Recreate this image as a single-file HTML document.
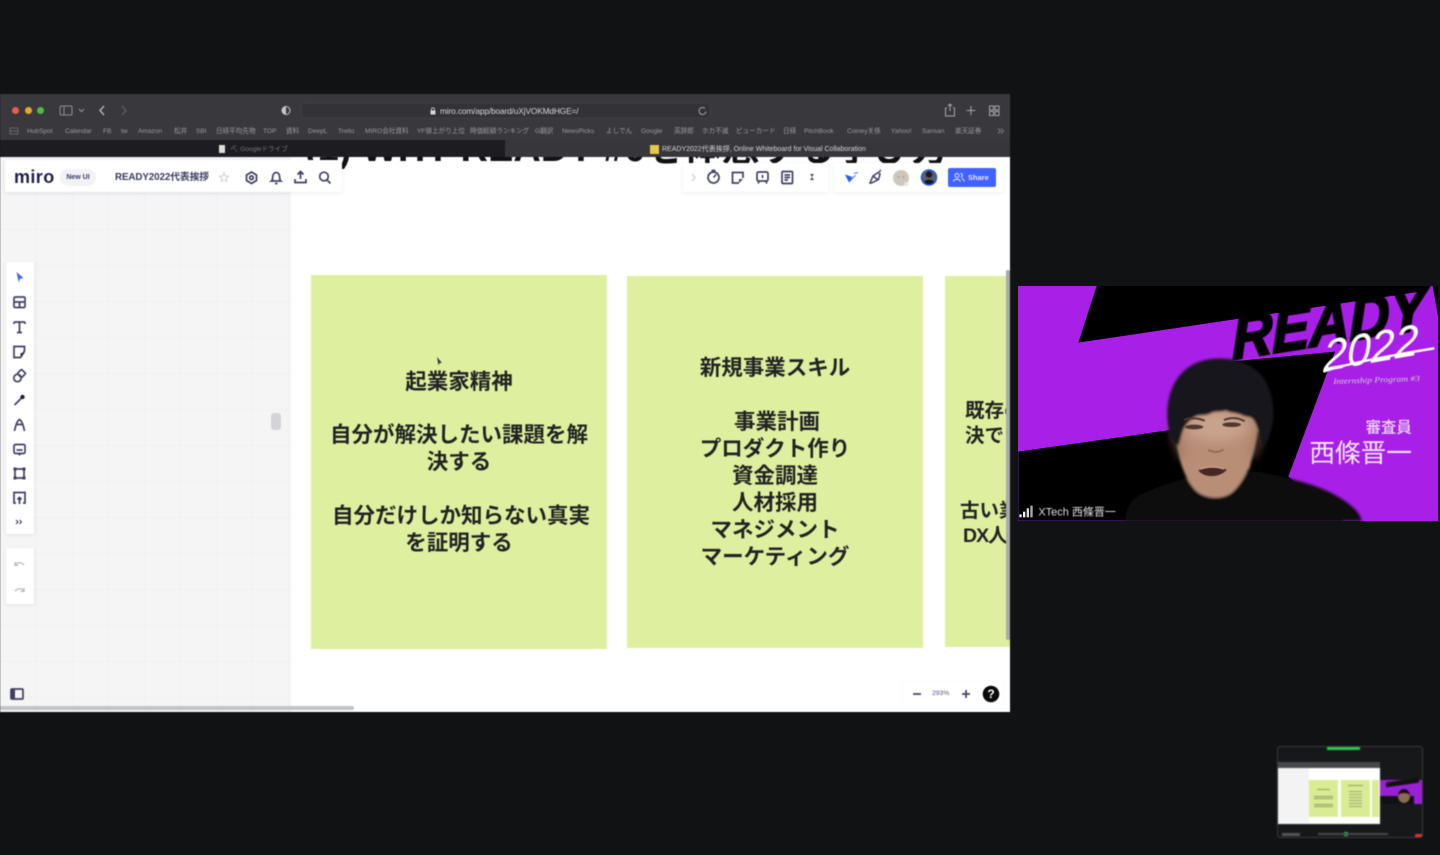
<!DOCTYPE html>
<html lang="ja"><head><meta charset="utf-8"><title>READY2022</title>
<style>
*{box-sizing:border-box}
html,body{margin:0;padding:0;width:1440px;height:855px;overflow:hidden;background:#111214}
body{font-family:"Liberation Sans","Noto Sans CJK JP",sans-serif;position:relative}
.a{position:absolute}
#win{left:0;top:94px;width:1010px;height:618px;overflow:hidden;background:#fff;filter:blur(.55px)}
#win .a{white-space:nowrap}
.bm{top:33px;font-size:6.6px;color:#9b9b9f;line-height:9px}
.note{background:#def09f;color:#222;font-weight:700;font-size:21.5px;line-height:27px;text-align:center}
.note div{position:absolute;white-space:nowrap}
.panel{background:#fff;box-shadow:0 1px 4px rgba(40,40,70,.09);border-radius:2px}
svg{position:absolute;overflow:visible}
.ic{fill:none;stroke:#3f3f62;stroke-width:1.7}
</style></head><body>

<div class="a" id="win">
  <!-- browser chrome -->
  <div class="a" style="left:0;top:0;width:1011px;height:46px;background:#39393d"></div>
  <div class="a" style="left:0;top:46px;width:505px;height:17px;background:#1d1d21"></div>
  <div class="a" style="left:505px;top:46px;width:506px;height:17px;background:#37373b"></div>
  <div class="a" style="left:12px;top:13px;width:7px;height:7px;border-radius:50%;background:#ef5a52"></div>
  <div class="a" style="left:25px;top:13px;width:7px;height:7px;border-radius:50%;background:#e8a82c"></div>
  <div class="a" style="left:37px;top:13px;width:7px;height:7px;border-radius:50%;background:#4fbb45"></div>
  <svg class="a" style="left:0;top:0" width="1011" height="46" fill="none" stroke="#8f8f93" stroke-width="1">
    <rect x="60" y="12" width="12" height="9" rx="1.5"/><path d="M64 12v9"/>
    <path d="M79 15l2.500 2.500 2.500-2.500" stroke-width="1.200"/>
    <path d="M104 12l-4 4.500 4 4.500" stroke="#b5b5b8" stroke-width="1.400"/>
    <path d="M122 12l4 4.500-4 4.500" stroke="#5c5c60" stroke-width="1.400"/>
    <circle cx="286" cy="16.500" r="4" stroke="#c8c8cc"/><path d="M286 12.500a4 4 0 0 0 0 8z" fill="#c8c8cc" stroke="none"/>
    <rect x="301" y="9" width="409" height="15" rx="4" fill="#333337" stroke="#404044"/>
    <path d="M705 14.500a3.500 3.500 0 1 0 1 3" stroke="#a5a5a9"/>
    <path d="M947 14h-1.500v8h9v-8H953M950 17v-7M948 12l2-2 2 2" stroke="#a5a5a9"/>
    <path d="M971 12v9M966.500 16.500h9" stroke="#a5a5a9"/>
    <rect x="989.500" y="12" width="4" height="4" stroke="#a5a5a9"/><rect x="995" y="12" width="4" height="4" stroke="#a5a5a9"/>
    <rect x="989.500" y="17.500" width="4" height="4" stroke="#a5a5a9"/><rect x="995" y="17.500" width="4" height="4" stroke="#a5a5a9"/>
    <path d="M10 34h8M10 37h8M10 40h8M10 34v6M18 34v6" stroke="#77777b" stroke-width=".7"/>
    <path d="M998 34.500l2.500 2.500-2.500 2.500M1001 34.500l2.500 2.500-2.500 2.500" stroke="#8f8f93" stroke-width=".8"/>
    <rect x="430.500" y="16.500" width="5" height="4" fill="#d8d8da" stroke="none"/><path d="M431.500 16.500v-1.200a1.500 1.500 0 0 1 3 0v1.200" stroke="#d8d8da" stroke-width=".8"/>
  </svg>
  <div class="a" style="left:440px;top:12px;font-size:8.300px;line-height:10px;color:#d8d8da;letter-spacing:-.12px">miro.com/app/board/uXjVOKMdHGE=/</div>
  <div class="a bm" style="left:27px">HubSpot</div><div class="a bm" style="left:65px">Calendar</div><div class="a bm" style="left:103px">FB</div><div class="a bm" style="left:121px">tw</div><div class="a bm" style="left:138px">Amazon</div><div class="a bm" style="left:174px">松井</div><div class="a bm" style="left:196px">SBI</div><div class="a bm" style="left:216px">日経平均先物</div><div class="a bm" style="left:263px">TOP</div><div class="a bm" style="left:286px">資料</div><div class="a bm" style="left:308px">DeepL</div><div class="a bm" style="left:338px">Trello</div><div class="a bm" style="left:365px">MIRO会社資料</div><div class="a bm" style="left:417px">YF値上がり上位</div><div class="a bm" style="left:470px">時価総額ランキング</div><div class="a bm" style="left:535px">G翻訳</div><div class="a bm" style="left:562px">NewsPicks</div><div class="a bm" style="left:606px">よしでん</div><div class="a bm" style="left:641px">Google</div><div class="a bm" style="left:674px">英辞郎</div><div class="a bm" style="left:702px">ホカ不滅</div><div class="a bm" style="left:736px">ビューカード</div><div class="a bm" style="left:783px">日経</div><div class="a bm" style="left:804px">PitchBook</div><div class="a bm" style="left:847px">Coiney关係</div><div class="a bm" style="left:891px">Yahoo!</div><div class="a bm" style="left:922px">Sansan</div><div class="a bm" style="left:955px">楽天証券</div>
  <div class="a" style="left:219px;top:51px;width:6px;height:8px;background:#ddd"></div>
  <div class="a" style="left:230px;top:51px;font-size:6.600px;line-height:10px;color:#77777b">⛏ Googleドライブ</div>
  <div class="a" style="left:650px;top:51px;width:9px;height:9px;background:#e5c84a"></div>
  <div class="a" style="left:662px;top:51px;font-size:7px;line-height:10px;color:#d5d5d8">READY2022代表挨拶, Online Whiteboard for Visual Collaboration</div>

  <!-- page -->
  <div class="a" style="left:0;top:63px;width:1011px;height:555px;background:#fff;overflow:hidden">
    <div class="a" style="left:0;top:0;width:291px;height:555px;background-color:#f5f5f6;background-image:linear-gradient(#f0f0f1 1px,transparent 1px),linear-gradient(90deg,#f0f0f1 1px,transparent 1px);background-size:36px 36px"></div>
    <div class="a" style="left:305px;top:-28px;font-size:38px;line-height:40px;font-weight:700;color:#111">(1) WHY READY #0を体感する学び方</div>

    <div class="a note" style="left:311px;top:118px;width:296px;height:374px">
      <div style="left:0;width:296px;top:94px">起業家精神</div>
      <div style="left:0;width:296px;top:147px">自分が解決したい課題を解<br>決する</div>
      <div style="left:2px;width:296px;top:228px">自分だけしか知らない真実</div>
      <div style="left:0;width:296px;top:255px">を証明する</div>
    </div>
    <div class="a note" style="left:627px;top:119px;width:296px;height:372px">
      <div style="left:0;width:296px;top:79px">新規事業スキル</div>
      <div style="left:2px;width:296px;top:133px">事業計画</div>
      <div style="left:0;width:296px;top:160px">プロダクト作り<br>資金調達<br>人材採用<br>マネジメント<br>マーケティング</div>
    </div>
    <div class="a note" style="left:945px;top:119px;width:66px;height:371px;overflow:hidden;font-size:19.500px;line-height:25px;text-align:left">
      <div style="left:20px;top:123px">既存の課題解<br>決できる</div>
      <div style="left:15px;top:223px">古い業界を</div>
      <div style="left:18px;top:248px;letter-spacing:-1px">DX人材で</div>
    </div>

    <!-- top-left panel -->
    <div class="a panel" style="left:5px;top:3px;width:337px;height:32px"></div>
    <div class="a" style="left:14px;top:9px;font-size:18px;line-height:22px;font-weight:700;color:#1f1f4a;letter-spacing:.4px">miro</div>
    <div class="a" style="left:60px;top:12px;width:36px;height:17px;border-radius:8px;background:#f3f3f7;font-size:7px;line-height:17px;font-weight:700;text-align:center;color:#3d3d62">New UI</div>
    <div class="a" style="left:115px;top:14px;font-size:9.800px;line-height:13px;color:#3a3a60;font-weight:700;letter-spacing:-.1px">READY2022代表挨拶</div>
    <svg class="a" style="left:0;top:0" width="1011" height="555">
      <path d="M224 16l1.300 3 3.200.3-2.400 2.100.7 3.100-2.800-1.600-2.800 1.600.7-3.100-2.400-2.100 3.200-.3z" fill="none" stroke="#cfcfdb"/>
      <path class="ic" d="M251.500 15l5 3v5.500l-5 3-5-3V18z"/><circle class="ic" cx="251.500" cy="20.700" r="1.800"/>
      <path class="ic" d="M271.500 24c1.500-1 1-3 1.300-5 .3-2 1.800-3.500 3.400-3.500s3 1.500 3.300 3.500c.3 2 0 4 1.300 5zM275 26.500h2.500"/>
      <path class="ic" d="M300.500 22v-7M297.500 17.500l3-3 3 3M295 22v3.500h11V22" stroke-width="1.800"/>
      <circle class="ic" cx="324" cy="19.500" r="4.300"/><path class="ic" d="M327 23l3.500 3.500"/>
    </svg>

    <!-- top-right panels -->
    <div class="a panel" style="left:683px;top:6px;width:145px;height:29px"></div>
    <div class="a panel" style="left:834px;top:6px;width:169px;height:29px"></div>
    <svg class="a" style="left:0;top:0" width="1011" height="555">
      <path d="M692 17l3 3.500-3 3.500" fill="none" stroke="#c8c8d2" stroke-width="1.200"/>
      <circle class="ic" cx="713.500" cy="20.500" r="5.500"/><path class="ic" d="M713.500 20.500l2.500-3M711.500 13.500h4"/>
      <path class="ic" d="M743 21v-5.500h-10.500v10.500H739" stroke-width="1.900"/><path d="M739 26l4-4h-4z" fill="#3f3f62"/>
      <rect class="ic" x="757" y="15" width="11" height="9" rx="1.500" stroke-width="1.800"/><path class="ic" d="M759 24l-.8 2.500M766 24l.8 2.500M762.500 18v3"/>
      <rect class="ic" x="782" y="14.500" width="10.500" height="12" rx="1"/><path class="ic" d="M784.500 18h5.500M784.500 20.500h5.500M784.500 23h3.500" stroke-width="1.100"/>
      <path d="M810 17h4l-2 3 2 3h-4l2-3z" fill="#4a4a68"/>
      <path d="M845 17.500l9 3-5 5z" fill="#2d5be3"/><path d="M854 16.500l4-1M851 21.500l5-3" stroke="#6d8cf0" stroke-width="1.200"/>
      <path d="M870 26l3-7 5-3.500 2 1.500-1.500 5.500-7 3.500zM873 19l5 4M879 15l2-2" fill="none" stroke="#3f3f62" stroke-width="1.500"/>
      <circle cx="901" cy="21" r="8" fill="#cfc6bd"/><circle cx="898.500" cy="20" r="1" fill="#a99f96"/><circle cx="903.500" cy="20" r="1" fill="#a99f96"/>
      <circle cx="906.500" cy="27" r="2" fill="#e6e6e6"/>
      <circle cx="929" cy="20.500" r="8.300" fill="#2f5be0"/><circle cx="929" cy="20.500" r="6.600" fill="#5a5f66"/><circle cx="929" cy="17.500" r="3.200" fill="#1c1c1e"/><path d="M924 25c1.500-3 8.500-3 10 0l-3 2h-4z" fill="#15161a"/>
    </svg>
    <div class="a" style="left:948px;top:11px;width:48px;height:19px;background:#4262ff;border-radius:2px;color:#dfe5ff;font-size:7.500px;line-height:19px;font-weight:700;padding-left:20px">Share</div>
    <svg class="a" style="left:952px;top:15px" width="14" height="11" fill="none" stroke="#dfe5ff" stroke-width="1"><circle cx="5" cy="3.500" r="2"/><path d="M1.500 9.500c.5-3 6-3 7 0M8.500 1.500c2 0 2.500 3 .5 4M10 6.500c1.500.5 2 1.500 2.200 3"/></svg>

    <!-- left toolbar -->
    <div class="a panel" style="left:6px;top:105px;width:28px;height:272px"></div>
    <div class="a panel" style="left:6px;top:391px;width:28px;height:56px"></div>
    <svg class="a" style="left:0;top:0" width="60" height="555">
      <path d="M16.500 115l7 6-3.500.8 -1.300 3.500z" fill="#3468ef"/>
      <rect class="ic" x="14" y="140" width="11" height="10.500" rx="1.300" stroke-width="1.900"/><path class="ic" d="M14 145h11M19.500 145v5.500"/>
      <path class="ic" d="M14 165h11M19.500 165v10.500M17 175.500h5M14 165v2M25 165v2" stroke-width="1.800"/>
      <path class="ic" d="M24.500 194v-4.500h-10.500v11h6.500z" stroke-width="1.900"/><path d="M20.500 200.500l4.200-4.500h-4.200z" fill="#2a2a48"/>
      <circle class="ic" cx="17.500" cy="221" r="3.700" stroke-width="1.800"/><rect class="ic" x="18.500" y="213.500" width="6" height="6" rx="1" transform="rotate(45 21.500 216.500)" stroke-width="1.600"/>
      <path d="M14.500 248l7-7" stroke="#3f3f62" stroke-width="1.700"/><circle cx="22.500" cy="240" r="2.200" fill="#22223f"/>
      <path class="ic" d="M14.500 274c1-5 2.500-10 5-11.500 2.500 1.500 4 6.500 5 11.500M16.500 267.500h6" stroke-width="1.800"/>
      <rect class="ic" x="14" y="287.500" width="11" height="9" rx="1.500" stroke-width="1.900"/><path class="ic" d="M16.500 293h6M19.500 296.500v2" stroke-width="1.100"/>
      <rect class="ic" x="15" y="312" width="9" height="9" stroke-width="1.500"/><path d="M13.500 310.500h3v3h-3zM22.500 310.500h3v3h-3zM13.500 319.500h3v3h-3zM22.500 319.500h3v3h-3z" fill="#3f3f62"/>
      <path class="ic" d="M16 346h-2v-10.500h11V346h-2M19.500 347v-6M17.500 342.500l2-2 2 2" stroke-width="1.700"/>
      <path d="M16 363l2 2-2 2M19.500 363l2 2-2 2" fill="none" stroke="#3f3f62" stroke-width="1.100"/>
      <path d="M15 408c2-3 6-3 9 0M15 405v3.300h3.300" fill="none" stroke="#b7b7c4" stroke-width="1.300"/>
      <path d="M15 434c3-3 7-3 9 0M24 431v3.300h-3.300" fill="none" stroke="#b7b7c4" stroke-width="1.300"/>
      <rect class="ic" x="11" y="532" width="12" height="10" rx="1" stroke-width="1.400"/><path d="M11 532h4v10h-4z" fill="#3f3f62"/>
    </svg>
    <div class="a" style="left:271px;top:256px;width:10px;height:17px;background:#d4d4d8;border-radius:3px"></div>
    <svg class="a" style="left:436px;top:199px" width="8" height="12"><path d="M1 1l5 6-2.500 0 -1 2.500z" fill="#33333a"/></svg>

    <!-- zoom controls -->
    <div class="a panel" style="left:903px;top:524px;width:100px;height:26px;box-shadow:0 0 3px rgba(40,40,70,.05)"></div>
    <svg class="a" style="left:0;top:0" width="1011" height="555">
      <path d="M913 537h8M962 537h8M966 533v8" stroke="#45456a" stroke-width="1.700"/>
      <circle cx="991" cy="537" r="8.300" fill="#0a0a0a"/>
    </svg>
    <div class="a" style="left:932px;top:532px;font-size:6.800px;line-height:10px;color:#55557a">293%</div>
    <div class="a" style="left:986px;top:529px;width:10px;text-align:center;font-size:12px;line-height:16px;font-weight:700;color:#fff">?</div>

    <div class="a" style="left:0;top:549px;width:354px;height:4px;background:#c4c4c6;border-radius:2px"></div>
    <div class="a" style="left:1006px;top:113px;width:4px;height:370px;background:#a9a9ab;border-radius:2px"></div>
  </div>
</div>

<!-- video tile -->
<svg class="a" style="left:1018px;top:286px;overflow:hidden" width="420" height="235" viewBox="0 0 420 235">
  <defs>
    <filter id="b1" x="-5%" y="-5%" width="110%" height="110%"><feGaussianBlur stdDeviation="1.500"/></filter>
    <filter id="b2" x="-10%" y="-10%" width="120%" height="120%"><feGaussianBlur stdDeviation="4"/></filter>
    <filter id="b3" x="-30%" y="-30%" width="160%" height="160%"><feGaussianBlur stdDeviation="14"/></filter>
  </defs>
  <g transform="translate(-1018 -286)">
    <g transform="translate(1010 280) scale(.33333)">
      <rect x="24" y="18" width="1260" height="705" fill="#a81fe8"/>
      <path d="M260 18H1255L1250 32 205 188zM1268 18h16v90z" fill="#000"/>
      <path d="M25 515L480 450 660 245 975 215 835 590 1000 722H25z" fill="#000"/>
      <g filter="url(#b1)">
        <g transform="translate(668 238) rotate(-9) skewX(-8)">
          <text x="0" y="0" font-family="Liberation Sans" font-style="italic" font-weight="700" font-size="185" textLength="590" lengthAdjust="spacingAndGlyphs" fill="#000" stroke="#000" stroke-width="7">READY</text>
        </g>
        <g transform="translate(940 274) rotate(-10) skewX(-10)">
          <text x="0" y="0" font-family="Liberation Sans" font-style="italic" font-size="130" textLength="290" lengthAdjust="spacingAndGlyphs" fill="#fff">2022</text>
        </g>
        <path d="M940 275c70-25 210-50 333-70" fill="none" stroke="#fff" stroke-width="7"/>
        <text x="970" y="312" font-family="Liberation Serif" font-style="italic" font-size="24" fill="#cfcfcf" textLength="260" lengthAdjust="spacingAndGlyphs" transform="rotate(-2 970 312)">Internship Program #3</text>
        <text x="1067" y="458" font-family="Noto Sans CJK JP" font-weight="500" font-size="46" fill="#ecd9f7">審査員</text>
        <text x="898" y="546" font-family="Noto Sans CJK JP" font-size="77" fill="#f3e6fa">西條晋一</text>
      </g>

      <g filter="url(#b2)">
        <path d="M345 723c3-40 20-70 60-85 40-18 90-35 130-45l210-18c70 15 170 35 230 70 45 25 75 50 80 78z" fill="#0d0d0e"/>
        <path d="M540 590c15 15 45 35 75 35s70-20 105-60l8-50-180 0z" fill="#8d644f"/>
        <!-- face -->
        <path d="M496 400c-6 100 22 195 65 235 30 24 82 24 108 0 45-40 78-135 78-240-15-45-60-50-125-50-70 0-122 10-126 55z" fill="#b88e76"/>
        <ellipse cx="620" cy="440" rx="90" ry="45" fill="#c9a28c" filter="url(#b3)"/>
        <path d="M498 430c4 40 14 75 30 100l-14 2c-14-20-24-60-24-92zM745 430c-2 40-12 75-28 100l14 2c14-20 22-60 22-92z" fill="#8f6651" filter="url(#b3)"/>
        <!-- hair: irregular fringe hairline -->
        <path d="M482 478c-18-70-14-145 30-195 34-38 82-50 130-47 52 3 100 25 125 68 24 42 30 105 15 150-5 20-16 35-30 50-2-28-6-58-20-82-10-16-24-8-40-18-16-6-30-4-44-12-14 6-30 0-46 8-18 10-30 2-46 10-16 10-30 24-38 44-6 18-8 30-12 42-8-2-18-10-24-18z" fill="#19181d"/>
      </g>
      <g filter="url(#b1)">
        <ellipse cx="552" cy="441" rx="28" ry="7" fill="#4f372d"/>
        <ellipse cx="665" cy="434" rx="28" ry="7" fill="#4f372d"/>
        <path d="M522 420c20-8 43-6 62 2M642 420c20-8 43-8 62 4" fill="none" stroke="#4f382d" stroke-width="6"/>
        <path d="M595 510c15 8 35 8 45-2" fill="none" stroke="#8e6656" stroke-width="5"/>
        <path d="M565 572c20-15 65-15 85-2-20 22-65 26-85 2z" fill="#4a2723"/>
        <path d="M572 567c20-8 50-8 70 0" fill="none" stroke="#d3ab94" stroke-width="3"/>
      </g>

      <rect x="28" y="703" width="7" height="9" fill="#eee"/><rect x="39" y="695" width="7" height="17" fill="#eee"/><rect x="50" y="685" width="7" height="27" fill="#ddd"/><rect x="61" y="677" width="7" height="35" fill="#aaa"/>
      <text x="85" y="707" font-family="Liberation Sans,Noto Sans CJK JP" font-size="33" fill="#dedede" filter="url(#b1)">XTech 西條晋一</text>
    </g>
  </g>
</svg>

<!-- self view thumbnail -->
<div class="a" style="left:1277px;top:746px;width:146px;height:92px;background:#17181a;border:1px solid #3b3b3d;border-radius:3px;overflow:hidden;filter:blur(.9px)">
  <div class="a" style="left:49px;top:0;width:33px;height:3px;background:#2dc653"></div>
  <div class="a" style="left:0;top:15px;width:102px;height:6px;background:#48484c"></div>
  <div class="a" style="left:0;top:21px;width:102px;height:56px;background:#fff"></div>
  <div class="a" style="left:0;top:21px;width:31px;height:55px;background:#f3f3f4"></div>
  <div class="a" style="left:31px;top:33px;width:29px;height:37px;background:#d9ec93"></div>
  <div class="a" style="left:63px;top:33px;width:29px;height:37px;background:#d9ec93"></div>
  <div class="a" style="left:94px;top:33px;width:7px;height:37px;background:#d9ec93"></div>
  <div class="a" style="left:39px;top:42px;width:13px;height:1px;background:#8f9a60"></div>
  <div class="a" style="left:36px;top:49px;width:19px;height:3px;background:repeating-linear-gradient(#8f9a60 0 1px,#d9ec93 1px 2px)"></div>
  <div class="a" style="left:36px;top:57px;width:19px;height:3px;background:repeating-linear-gradient(#8f9a60 0 1px,#d9ec93 1px 2px)"></div>
  <div class="a" style="left:70px;top:38px;width:15px;height:1px;background:#8f9a60"></div>
  <div class="a" style="left:71px;top:44px;width:13px;height:17px;background:repeating-linear-gradient(#9aa56b 0 1px,#d9ec93 1px 3px)"></div>
  <div class="a" style="left:102px;top:33px;width:43px;height:24px;background:#9a20d8"></div>
  <div class="a" style="left:108px;top:33px;width:33px;height:5px;background:#111;transform:skewY(-8deg)"></div>
  <div class="a" style="left:102px;top:49px;width:34px;height:8px;background:#111"></div>
  <div class="a" style="left:120px;top:42px;width:12px;height:14px;background:#8c6a55;border-radius:50%;border-top:4px solid #111"></div>
  <div class="a" style="left:137px;top:87px;width:7px;height:3px;background:#e0312c"></div>
  <div class="a" style="left:66px;top:85px;width:4px;height:4px;background:#2dc653"></div>
  <div class="a" style="left:4px;top:86px;width:18px;height:3px;background:#555"></div>
  <div class="a" style="left:40px;top:86px;width:70px;height:2px;background:#4a4a4c"></div>
</div>
</body></html>
